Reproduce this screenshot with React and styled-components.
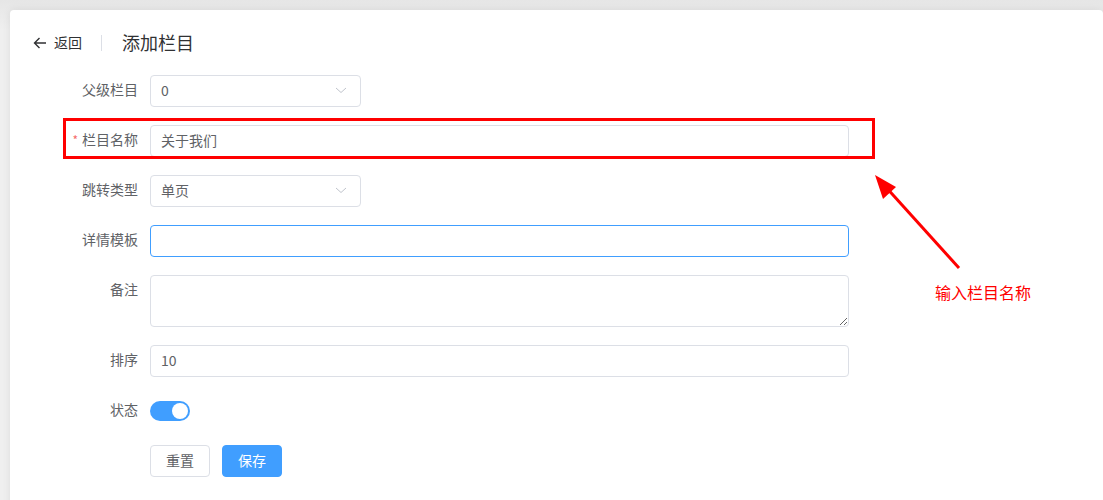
import styled, { createGlobalStyle } from 'styled-components';

const GlobalStyle = createGlobalStyle`
    html, body {
        margin: 0;
        padding: 0;
        background: #efefef;
        font-family: "Noto Sans CJK SC", "Liberation Sans", sans-serif;
        font-size: 14px;
        color: #606266;
    }
    * { box-sizing: border-box; }
`;

const Page = styled.div`
    position: relative;
    width: 1103px;
    height: 500px;
    overflow: hidden;
    padding: 10px 0 0 10px;
    background: linear-gradient(#e6e6e6, #efefef 30px);
`;

const Card = styled.div`
    background: #fff;
    border-radius: 4px;
    box-shadow: 0 0 8px rgba(0, 0, 0, 0.08);
    min-height: 520px;
    padding: 21px 22px;
`;

const Header = styled.div`
    display: flex;
    align-items: center;
    height: 24px;
    padding-bottom: 2px;
    margin-bottom: 20px;
`;

const Back = styled.a`
    display: flex;
    align-items: center;
    gap: 6px;
    color: #303133;
    font-size: 14px;
    cursor: pointer;

    svg { margin-top: 1px; }
`;

const Divider = styled.span`
    width: 1px;
    height: 16px;
    background: #dcdfe6;
    margin: 2px 20px 0 19px;
`;

const Title = styled.h1`
    margin: 0;
    font-size: 18px;
    font-weight: normal;
    color: #303133;
`;

const Form = styled.form`
    display: flex;
    flex-direction: column;
    gap: 18px;
`;

const Row = styled.div`
    display: flex;
    align-items: flex-start;
`;

const Label = styled.label`
    width: 118px;
    flex-shrink: 0;
    padding: 0 12px 3px 0;
    text-align: right;
    line-height: 29px;
    font-size: 14px;
    color: #606266;

    &::before {
        content: ${p => (p.$required ? '"*"' : 'none')};
        color: #f56c6c;
        font-size: 12px;
        margin-right: 4px;
    }
`;

const Input = styled.input`
    width: ${p => p.$width || 699}px;
    height: 32px;
    padding: 0 10px 3px;
    border: 1px solid ${p => (p.$focus ? '#409eff' : '#dcdfe6')};
    border-radius: 4px;
    font-family: inherit;
    font-size: 14px;
    color: #606266;
    outline: none;
    background: #fff;
`;

const TextArea = styled.textarea`
    width: 699px;
    height: 52px;
    padding: 5px 10px;
    border: 1px solid #dcdfe6;
    border-radius: 4px;
    font-family: inherit;
    font-size: 14px;
    color: #606266;
    resize: vertical;
    outline: none;
    display: block;
`;

const SelectBox = styled.div`
    width: 211px;
    height: 32px;
    padding: 0 13px 3px 10px;
    border: 1px solid #dcdfe6;
    border-radius: 4px;
    display: flex;
    align-items: center;
    justify-content: space-between;
    color: #606266;
    cursor: pointer;
`;

const Switch = styled.span`
    margin-top: 6px;
    width: 40px;
    height: 20px;
    border-radius: 10px;
    background: ${p => (p.$on ? '#409eff' : '#dcdfe6')};
    display: flex;
    align-items: center;
    justify-content: ${p => (p.$on ? 'flex-end' : 'flex-start')};
    padding: 2px;

    &::after {
        content: '';
        width: 16px;
        height: 16px;
        border-radius: 50%;
        background: #fff;
    }
`;

const Actions = styled.div`
    display: flex;
    gap: 12px;
    padding-left: 118px;
`;

const Button = styled.button`
    height: 32px;
    padding: 0 15px 2px;
    border-radius: 4px;
    font-family: inherit;
    font-size: 14px;
    cursor: pointer;
    border: 1px solid ${p => (p.$primary ? '#409eff' : '#dcdfe6')};
    background: ${p => (p.$primary ? '#409eff' : '#fff')};
    color: ${p => (p.$primary ? '#fff' : '#606266')};
`;

const HighlightBox = styled.div`
    position: absolute;
    left: 63px;
    top: 118px;
    width: 812px;
    height: 41px;
    border: 3px solid #ff0000;
    pointer-events: none;
`;

const Arrow = styled.svg`
    position: absolute;
    left: 0;
    top: 0;
    pointer-events: none;
`;

const Note = styled.div`
    position: absolute;
    left: 935px;
    top: 280px;
    color: #ff0000;
    font-size: 16px;
`;

const Chevron = () => (
    <svg width="12" height="12" viewBox="0 0 12 12">
        <path d="M1 4 L6 8.5 L11 4" fill="none" stroke="#c0c4cc" strokeWidth="1" />
    </svg>
);

const BackArrow = () => (
    <svg width="16" height="16" viewBox="0 0 16 16">
        <path d="M14 8 H2.5 M7.5 3 L2.5 8 L7.5 13" fill="none" stroke="#303133" strokeWidth="1.4" />
    </svg>
);

const Select = ({ value }) => (
    <SelectBox>
        <span>{value}</span>
        <Chevron />
    </SelectBox>
);

export default function App() {
    return (
        <>
            <GlobalStyle />
            <Page>
                <Card>
                    <Header>
                        <Back><BackArrow />返回</Back>
                        <Divider />
                        <Title>添加栏目</Title>
                    </Header>
                    <Form onSubmit={e => e.preventDefault()}>
                        <Row>
                            <Label>父级栏目</Label>
                            <Select value="0" />
                        </Row>
                        <Row>
                            <Label $required>栏目名称</Label>
                            <Input defaultValue="关于我们" />
                        </Row>
                        <Row>
                            <Label>跳转类型</Label>
                            <Select value="单页" />
                        </Row>
                        <Row>
                            <Label>详情模板</Label>
                            <Input $focus />
                        </Row>
                        <Row>
                            <Label>备注</Label>
                            <TextArea />
                        </Row>
                        <Row>
                            <Label>排序</Label>
                            <Input defaultValue="10" />
                        </Row>
                        <Row>
                            <Label>状态</Label>
                            <Switch $on />
                        </Row>
                        <Actions>
                            <Button type="button">重置</Button>
                            <Button type="button" $primary>保存</Button>
                        </Actions>
                    </Form>
                </Card>
                <HighlightBox />
                <Arrow width="1103" height="500" viewBox="0 0 1103 500">
                    <line x1="959" y1="268" x2="884" y2="185" stroke="#ff0000" strokeWidth="3" />
                    <polygon points="875,175 896,187 883,199" fill="#ff0000" />
                </Arrow>
                <Note>输入栏目名称</Note>
            </Page>
        </>
    );
}
